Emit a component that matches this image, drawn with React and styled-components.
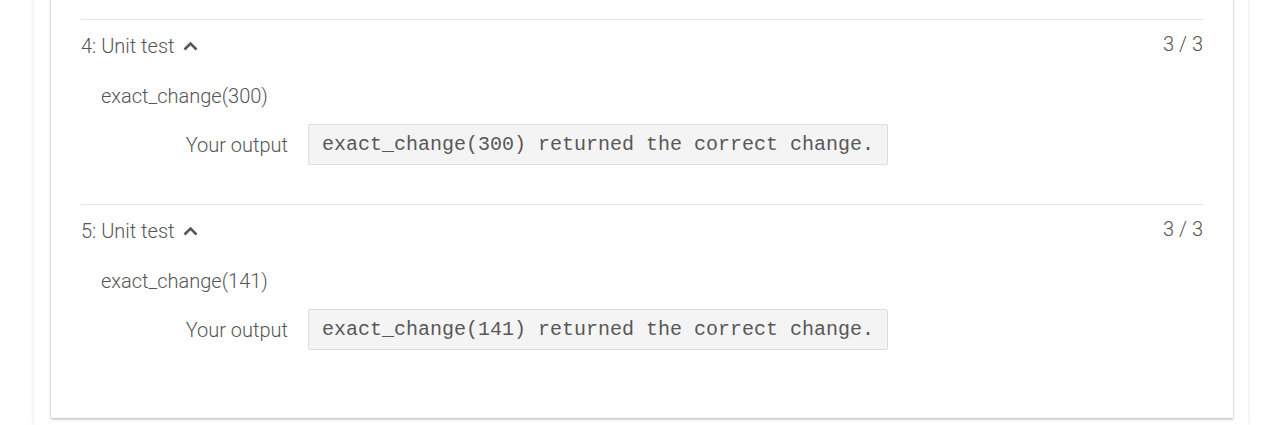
import React from 'react'
import styled, { createGlobalStyle } from 'styled-components'

const GlobalStyle = createGlobalStyle`
  body {
    margin: 0;
    background: #fff;
    font-family: Roboto, "Liberation Sans", sans-serif;
    overflow: hidden;
  }
`

const Page = styled.div`
  width: 1214px;
  height: 445px;
  margin: -20px 0 0 34px;
  padding: 0 15px 0 17px;
  box-sizing: border-box;
  box-shadow: 0 0 4px rgba(0,0,0,.12);
`

const Card = styled.div`
  background: #fff;
  padding: 39px 30px 29px;
  box-shadow: 0 1px 3px rgba(0,0,0,.22), 0 1px 2px rgba(0,0,0,.12);
`

const Test = styled.section`
  border-top: 1px solid #e6e6e6;
  padding: 14px 0 39px;
`

const Header = styled.div`
  display: flex;
  justify-content: space-between;
  align-items: center;
  font-size: 20px;
  font-weight: 300;
  line-height: 24px;
  color: #555;
`

const Title = styled.div`
  display: flex;
  align-items: center;
  gap: 9px;
`

const Score = styled.span`
  position: relative;
  top: -2px;
`

const Call = styled.div`
  margin: 26px 0 0 20px;
  font-size: 20px;
  font-weight: 300;
  line-height: 24px;
  color: #555;
`

const OutputRow = styled.div`
  display: flex;
  align-items: center;
  gap: 20px;
  margin: 16px 0 0 20px;
`

const Label = styled.div`
  width: 187px;
  text-align: right;
  font-size: 20px;
  font-weight: 300;
  color: #555;
`

const Code = styled.pre`
  margin: 0;
  padding: 8px 13px;
  background: #f4f4f4;
  border: 1px solid #dcdcdc;
  border-radius: 2px;
  font-family: "Liberation Mono", "Courier New", monospace;
  font-size: 20px;
  line-height: 23px;
  color: #585858;
`

const Chevron = () => (
  <svg width="15" height="10" viewBox="0 0 15 10">
    <path d="M1.5 8.5 L7.5 2.5 L13.5 8.5" fill="none" stroke="#555" strokeWidth="2.6" />
  </svg>
)

const tests = [
  { n: 4, arg: 300 },
  { n: 5, arg: 141 },
]

const App = () => (
  <>
    <GlobalStyle />
    <Page>
      <Card>
        {tests.map(t => (
          <Test key={t.n}>
            <Header>
              <Title>
                {t.n}: Unit test
                <Chevron />
              </Title>
              <Score>3 / 3</Score>
            </Header>
            <Call>exact_change({t.arg})</Call>
            <OutputRow>
              <Label>Your output</Label>
              <Code>exact_change({t.arg}) returned the correct change.</Code>
            </OutputRow>
          </Test>
        ))}
      </Card>
    </Page>
  </>
)

export default App
